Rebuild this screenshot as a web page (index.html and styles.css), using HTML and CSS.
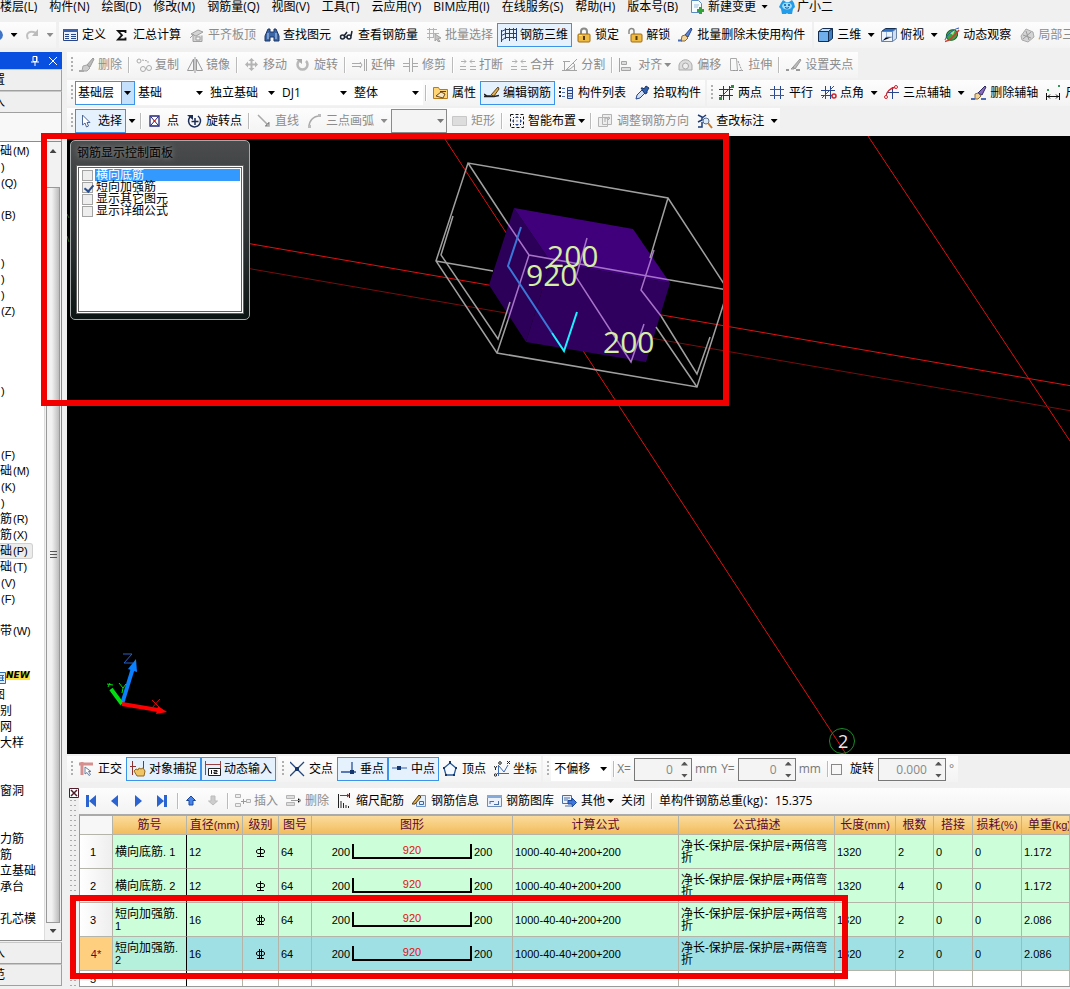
FILE: index.html
```html
<!DOCTYPE html>
<html lang="zh-CN">
<head>
<meta charset="utf-8">
<title>钢筋三维</title>
<link rel="stylesheet" href="styles.css">
</head>
<body>
<svg class="sprite" aria-hidden="true">
  <symbol id="define" viewBox="0 0 16 16"><path fill="#eaf1fb" stroke="#27458c" d="M.5 2.500h14v11H.5z"/><path fill="#3c62ad" d="M0 2h15v3H0z"/><path stroke="#27458c" d="M2 7.500h4M2 9.500h4M2 11.500h4M8 7.500h5M8 9.500h5M8 11.500h5"/></symbol>
  <symbol id="sum" viewBox="0 0 16 16"><path fill="none" stroke="#111" stroke-width="1.800" d="M11.500 6V4H4l4 4.200L4 12.500h7.500v-2"/></symbol>
  <symbol id="slab" viewBox="0 0 16 16"><path fill="#d4d4d4" stroke="#a0a0a0" d="M2 7l7-4 5 2-7 4zM4 8.500v6h9v-6M7 10h4v3H7zM1 11l4-4"/></symbol>
  <symbol id="find" viewBox="0 0 16 16"><path fill="#3b66a8" stroke="#1c3766" d="M4 2h2v3h4V2h2l3 7v5h-5v-4H6v4H1V9z"/><path stroke="#b9d4f4" d="M4 6v6M12 6v6"/></symbol>
  <symbol id="glasses" viewBox="0 0 16 16"><g fill="none" stroke="#1a2433" stroke-width="1.500"><circle cx="3.500" cy="10" r="2"/><circle cx="10" cy="10" r="2"/><path d="M5 9l3-4M12 9l1-5M6 10h2"/></g></symbol>
  <symbol id="batch" viewBox="0 0 16 16"><path fill="none" stroke="#b4b4b4" d="M1 2.500h10M1 6.500h12M1 10.500h7M3.500 1v12M7.500 1v10"/><path fill="#c6c6c6" stroke="#a4a4a4" d="M9 7l6 4-3 .5 2 3h-2l-1.500-2.500L9 14z"/></symbol>
  <symbol id="rebar3d" viewBox="0 0 16 16"><path fill="none" stroke="#24407e" d="M.5 4.500l4-2h11M.5 8.500l4-2h11M.5 13.500l4-3h11M.5 3v12M4.500 1v11M8.500 1v13M12.500 1v11M15.500 1v13"/></symbol>
  <symbol id="lock" viewBox="0 0 16 16"><path fill="none" stroke="#8a8a86" stroke-width="2" d="M5 8V4.500a3 3 0 016 0V8"/><rect x="2" y="7" width="12" height="8" rx="1" fill="#f0bb42" stroke="#a06b10"/><path stroke="#533807" stroke-width="2" d="M8 9v4"/><path stroke="#ffe7a0" d="M3 8.500h3"/></symbol>
  <symbol id="unlock" viewBox="0 0 16 16"><path fill="none" stroke="#8a8a86" stroke-width="1.500" d="M2 7V4a2.500 2.500 0 015 0v3"/><rect x="4" y="7" width="11" height="8" rx="1" fill="#f0bb42" stroke="#a06b10"/><path stroke="#533807" stroke-width="2" d="M9.500 9v4"/></symbol>
  <symbol id="brush" viewBox="0 0 16 16"><path fill="#5b83cf" stroke="#27458c" d="M7 8l6-7 1 1-4 8z"/><path fill="#f0d39a" stroke="#8b6a3a" d="M4 9l3-1 3 3-3 3H3z"/><path stroke="#4a6ab2" stroke-width="2" d="M0 13.500h4"/></symbol>
  <symbol id="brushgray" viewBox="0 0 16 16"><path fill="#bbb" stroke="#999" d="M8 8l6-7 1 1-4 8z"/><path fill="#ccc" stroke="#a4a4a4" d="M4 9l4-1 3 3-3 3H3z"/><path stroke="#aaa" stroke-width="2" d="M0 14h5"/></symbol>
  <symbol id="cube" viewBox="0 0 16 16"><path fill="#bfe0fb" stroke="#152d50" d="M.5 4.500l4-3h10l-4 3z"/><path fill="#6fb0ec" stroke="#152d50" d="M.5 4.500h10v10H.5z"/><path fill="#3c7fc5" stroke="#152d50" d="M10.500 4.500l4-3v10l-4 3z"/></symbol>
  <symbol id="topview" viewBox="0 0 16 16"><path fill="#2d6fc0" stroke="#152d50" d="M.5 4.500l4-3h11l-4 3z"/><path fill="#eef4fb" stroke="#6982a6" d="M.5 4.500h11v10H.5z"/><path fill="#cfdff2" stroke="#6982a6" d="M11.500 4.500l4-3v10l-4 3z"/><path stroke="#9bb4d6" d="M1 14l4-4h6M5.500 5v5"/></symbol>
  <symbol id="orbit" viewBox="0 0 16 16"><ellipse cx="8" cy="8" rx="6" ry="5" transform="rotate(-35 8 8)" fill="#37a447" stroke="#146226"/><path fill="#a3e68c" d="M6 6l5-3-2 5z"/><path fill="none" stroke="#d9392c" stroke-width="1.500" d="M1 14.500C6 14 12 7 15 3"/><path fill="none" stroke="#2b58b4" d="M1 13C2 9 9 2 15 1"/></symbol>
  <symbol id="local" viewBox="0 0 16 16"><path fill="#d3d3d3" stroke="#aaa" d="M2 9l5-7 7 3 1 5-6 5-6-2z"/><path stroke="#999" d="M4 8l8 3M7 4l3 9M12 5l-8 7"/></symbol>
  <symbol id="newdoc" viewBox="0 0 16 16"><path fill="#f6fbff" stroke="#5a8bc0" d="M1.500 1.500h7l3 3v9h-10z"/><path stroke="#9bbce0" d="M4 6h5M4 8h4"/><path stroke="#32a436" stroke-width="3" d="M10.500 8v7M7 11.500h7"/></symbol>
  <symbol id="mascot" viewBox="0 0 16 16"><path fill="#229be8" d="M2 4l2-3 3 2h3l3-2 2 3 1 4-2 2-1 5H9l-1-1-1 1H3l-1-5-2-2z"/><ellipse cx="8" cy="7" rx="5" ry="3.500" fill="#9bdcff"/><path stroke="#105698" stroke-width="1.500" d="M6 5v2M10 5v2"/><path fill="none" stroke="#105698" d="M6 8.500q2 1.500 4 0"/></symbol>
  <symbol id="redo" viewBox="0 0 16 16"><path fill="none" stroke="#c0c0c0" stroke-width="2" d="M4 12C1 6 6 3 12 6"/><path fill="#bbb" d="M14 2v7H8z"/></symbol>
  <symbol id="copy" viewBox="0 0 16 16"><g fill="none" stroke="#aaa"><circle cx="3" cy="4" r="2"/><circle cx="7" cy="12" r="2.500"/><circle cx="13" cy="11" r="2.500"/><path stroke-dasharray="2 1" d="M6 3l6 1v3"/></g></symbol>
  <symbol id="mirror" viewBox="0 0 16 16"><path fill="none" stroke="#999" d="M6.500 2v11.500h-6zM9.500 2v11.500h6zM8 0v16"/></symbol>
  <symbol id="move" viewBox="0 0 16 16"><path stroke="#b4b4b4" stroke-width="2" d="M7.500 3v9M3 7.500h9"/><path fill="#b4b4b4" d="M7.500 1l3 3h-6zM7.500 14l3-3h-6zM1 7.500l3-3v6zM14 7.500l-3-3v6z"/></symbol>
  <symbol id="rotate" viewBox="0 0 16 16"><path fill="none" stroke="#b8b8b8" stroke-width="2.500" d="M4 4a5 5 0 107 0"/><path fill="#aaa" d="M1 2h6v5z"/></symbol>
  <symbol id="extend" viewBox="0 0 16 16"><path fill="none" stroke="#aaa" d="M0 6.500h9M0 9.500h9M8 5l2 3-2 3M12.500 2v12M14.500 2v12"/></symbol>
  <symbol id="trim" viewBox="0 0 16 16"><path fill="none" stroke="#aaa" d="M0 6.500h6M0 9.500h6M10 6.500h5M10 9.500h5M6.500 1v14M9.500 1v14"/></symbol>
  <symbol id="breakl" viewBox="0 0 16 16"><path fill="none" stroke="#b0b0b0" d="M0 9.500h6M10 9.500h6M0 12.500h6M10 12.500h6M1 4.500h5M4 2.500l2 2-2 2M15 4.500h-5M12 2.500l-2 2 2 2"/></symbol>
  <symbol id="split" viewBox="0 0 16 16"><path fill="none" stroke="#a4a4a4" d="M1 4.500h7M0 13.500h15M11 6l4-4M4 13l7-7 2 2-5 4zM12.500 8v6M2.500 5v8"/></symbol>
  <symbol id="align" viewBox="0 0 16 16"><path fill="#ddd" stroke="#a4a4a4" d="M.5 1v14M2.500 4.500h5v3h-5zM2.500 10.500h9v3h-9z"/></symbol>
  <symbol id="offset" viewBox="0 0 16 16"><path fill="#ddd" stroke="#aaa" d="M1 13V8c2-7 11-7 13 0v5z"/><circle cx="7.500" cy="9" r="3" fill="#eee" stroke="#aaa"/></symbol>
  <symbol id="stretch" viewBox="0 0 16 16"><path fill="none" stroke="#aaa" d="M1.500 1.500h6l1 12h-7z"/><path stroke="#999" stroke-dasharray="2 1" d="M9 4l4 10M4 13.500h10"/></symbol>
  <symbol id="grip" viewBox="0 0 16 16"><path fill="#bbb" stroke="#999" d="M7 10l7-8 1 1-6 9zM5 12l2-2 1 2z"/><path stroke="#999" stroke-width="2" d="M0 13h3M10 13h4"/></symbol>
  <symbol id="props" viewBox="0 0 16 16"><path fill="#ffd474" stroke="#b57a1c" d="M.5 2.500h5l1 2h8v9H.5z"/><path fill="#f5e6c6" stroke="#6b4a20" d="M3 11l5-4 4 2-2 4z"/><path stroke="#27458c" d="M7 6.500h6"/></symbol>
  <symbol id="editbar" viewBox="0 0 16 16"><path fill="none" stroke="#222" stroke-width="1.500" d="M0 9l3 2h4M0 11.500h10l5-1"/><path fill="#e3b257" stroke="#5c4214" d="M7 10l7-8 1 2-5 7z"/></symbol>
  <symbol id="list" viewBox="0 0 16 16"><path stroke="#222" stroke-width="2" stroke-dasharray="2 2" d="M1 2v12"/><path stroke="#4b6fb0" d="M3 3.500h3M3 7.500h3M3 11.500h3"/><path fill="#dbe8fb" stroke="#27458c" d="M8.500 2.500h5v11h-5z"/><path stroke="#27458c" d="M9 5.500h4M9 8.500h4M9 11h4"/></symbol>
  <symbol id="picker" viewBox="0 0 16 16"><path fill="#cfe0f8" stroke="#27458c" d="M2 14l1-4 5-5 3 3-5 5z"/><path fill="#2d62b5" stroke="#1c3766" d="M7 3l2 0 1 1 2-3 3 2-2 3 0 2-2 1z"/></symbol>
  <symbol id="twopt" viewBox="0 0 16 16"><path stroke="#26355c" d="M4.500 1v14M10.500 1v14M0 4.500h14M0 10.500h14"/><path stroke="#8c2630" d="M1 13L13 1"/><path fill="#2b8a3c" d="M0 12h3v3H0zM12 0h3v3h-3z"/></symbol>
  <symbol id="parallel" viewBox="0 0 16 16"><path stroke="#27458c" d="M4.500 1v13M10.500 1v13"/><path stroke="#b2323a" d="M0 4.500h14M0 10.500h14"/></symbol>
  <symbol id="ptangle" viewBox="0 0 16 16"><path stroke="#27458c" d="M4.500 1v13M9.500 1v13M0 5.500h14M0 10.500h11"/><path fill="none" stroke="#c9202c" d="M1 13L13 1"/><circle cx="13" cy="11" r="2" fill="none" stroke="#d2222c" stroke-width="1.500"/></symbol>
  <symbol id="threept" viewBox="0 0 16 16"><path stroke="#27458c" d="M8.500 2v12M3 7.500h12"/><path fill="none" stroke="#d2222c" stroke-width="1.300" d="M2 12C2 7 6 3 12 2"/><circle cx="2" cy="12" r="1.500" fill="#fff" stroke="#d2222c"/><circle cx="12" cy="2" r="1.500" fill="#fff" stroke="#d2222c"/></symbol>
  <symbol id="delaxis" viewBox="0 0 16 16"><path fill="#8a6bc0" stroke="#302a60" d="M7 8l7-7 1 1-4 8z"/><path fill="#f0d39a" stroke="#8b6a3a" d="M4 9l3-1 3 3-3 3H4z"/><path stroke="#4a6ab2" stroke-width="2" d="M0 14h4M10 14h5"/></symbol>
  <symbol id="dim" viewBox="0 0 16 16"><path fill="none" stroke="#111" d="M.5 8v7M13.500 8v7M1 11.500h12M4 9.500l-2 2 2 2M10 9.500l2 2-2 2"/><path fill="#2f9a55" d="M1 4h2v2H1zM12 0h2v2h-2z"/></symbol>
  <symbol id="pointer" viewBox="0 0 16 16"><path fill="#fff" stroke="#4d6796" d="M3.500 2v10l2.500-2 1.500 4 2-1L8 9.500h3z"/></symbol>
  <symbol id="point" viewBox="0 0 16 16"><path fill="#fff" stroke="#22227c" stroke-width="1.300" d="M2 3h9v10H2z"/><path stroke="#22227c" d="M3 4l7 8M10 4l-7 8"/><path fill="#c22" d="M5.500 7h2v2h-2z"/></symbol>
  <symbol id="rotpt" viewBox="0 0 16 16"><path fill="none" stroke="#1b2d56" stroke-width="1.500" d="M3 4a6 6 0 108-1M8 5v7M4.500 8.500h7"/><path fill="#1b2d56" d="M0 2h6v5z"/></symbol>
  <symbol id="line" viewBox="0 0 16 16"><path stroke="#aaa" stroke-width="1.500" d="M2 2l11 11M13 9v4H9"/></symbol>
  <symbol id="arc" viewBox="0 0 16 16"><path fill="none" stroke="#aaa" stroke-width="1.500" d="M2 14C2 8 6 3 13 3"/><path fill="#bbb" d="M1 12h3v3H1zM11 1h3v3h-3z"/></symbol>
  <symbol id="rect" viewBox="0 0 16 16"><path fill="#ddd" stroke="#c8c8c8" d="M.5 3.500h14v9H.5z"/></symbol>
  <symbol id="smart" viewBox="0 0 16 16"><path fill="none" stroke="#111" stroke-dasharray="3 2" d="M1.500 1.500h13v13h-13z"/><path fill="#27458c" d="M8 3l2 2H6zM8 13l2-2H6zM3 8l2-2v4zM13 8l-2-2v4z"/><path fill="#111" d="M4 4h1v1H4zM11 4h1v1h-1zM4 11h1v1H4zM11 11h1v1h-1zM7.500 7.500h1v1h-1z"/></symbol>
  <symbol id="adjust" viewBox="0 0 16 16"><path fill="#eee" stroke="#b4b4b4" d="M.5 4.500h9v9h-9zM4.500 1.500h9v10h-9z"/><path fill="none" stroke="#aaa" d="M7 9V5h4M10 4l2 1-2 2"/></symbol>
  <symbol id="check" viewBox="0 0 16 16"><path fill="none" stroke="#1d3c78" stroke-width="1.500" d="M1 2l4 2v3L1 9M1 14h4V9M5 5l4-3"/><circle cx="9" cy="8" r="3" fill="#dcecfb" stroke="#5a6f8c"/><path stroke="#c57a28" stroke-width="2" d="M11 10l4 5"/></symbol>
  <symbol id="ortho" viewBox="0 0 16 16"><path fill="none" stroke="#d68f8f" stroke-width="3" d="M0 3h14M3 1v13"/><path fill="#fff" stroke="#6a7f9c" d="M6 6v7l2-1.500 2 3 1.500-1-2-3H12z"/></symbol>
  <symbol id="snap" viewBox="0 0 16 16"><path stroke="#8b3030" d="M2.500 0v14M0 5.500h6M13.500 0v8"/><path fill="#f0c565" stroke="#94691f" d="M4 10l2-2 2 1 1-2 2 1 2-1 2 3-1 5H7z"/></symbol>
  <symbol id="dyn" viewBox="0 0 16 16"><path fill="none" stroke="#9b4040" d="M.5 0v14M15.500 0v8M1 3.500h14"/><path fill="#fff" stroke="#222" d="M3.500 7.500h12v7h-12z"/><path fill="none" stroke="#111" d="M6.500 9v4M8.500 9.500h3.500v1.500H9v1.500h3.500"/></symbol>
  <symbol id="cross" viewBox="0 0 16 16"><path stroke="#24487e" stroke-width="1.300" d="M0 1l14 14M14 1L0 15"/><path fill="#14366e" d="M5 6h4v4H5z"/></symbol>
  <symbol id="perp" viewBox="0 0 16 16"><path stroke="#2a5298" stroke-width="1.300" d="M0 11h15M11 1v10"/><path fill="#14366e" d="M9 9h4v4H9z"/></symbol>
  <symbol id="mid" viewBox="0 0 16 16"><path stroke="#5a82c4" stroke-width="1.300" d="M0 7h15"/><path fill="#14366e" d="M5 5h4v4H5z"/></symbol>
  <symbol id="vertex" viewBox="0 0 16 16"><path fill="#f4f9ff" stroke="#2a5a94" stroke-width="1.300" d="M7 2l6 5-2 7H3L1 7z"/><path fill="#14366e" d="M6 0h2v3H6zM0 6h2v2H0zM12 6h2v2h-2zM2 13h2v2H2zM10 13h2v2h-2z"/></symbol>
  <symbol id="coord" viewBox="0 0 16 16"><path fill="none" stroke="#3b6bb4" d="M4.500 4v11M3 12.500h12M5 5l5 6 4-7"/><path fill="none" stroke="#222" d="M13 0l3 3M16 0l-3 3M0 5l1.500 2L3 5M1.500 7v2"/><circle cx="6" cy="2" r="1.300" fill="none" stroke="#222"/><circle cx="1.500" cy="14" r="1.200" fill="none" stroke="#222"/></symbol>
  <symbol id="first" viewBox="0 0 16 16"><path fill="#2b63d0" d="M3 2h3v12H3zM13 2v12L6 8z"/></symbol>
  <symbol id="prev" viewBox="0 0 16 16"><path fill="#2b63d0" d="M11 2v12L4 8z"/></symbol>
  <symbol id="next" viewBox="0 0 16 16"><path fill="#2b63d0" d="M4 2v12l7-6z"/></symbol>
  <symbol id="last" viewBox="0 0 16 16"><path fill="#2b63d0" d="M9 2h3v12H9zM2 2v12l7-6z"/></symbol>
  <symbol id="up" viewBox="0 0 16 16"><path fill="#4a86ea" stroke="#1c489c" d="M7 3l4.500 4.500H9V12H5V7.500H2.500z"/></symbol>
  <symbol id="down" viewBox="0 0 16 16"><path fill="#ccc" stroke="#bbb" d="M7 12L2.500 8H5V3h4v5h2.500z"/></symbol>
  <symbol id="insert" viewBox="0 0 16 16"><path fill="#eee" stroke="#b4b4b4" d="M.5 1.500h5v3h-5zM.5 10.500h5v3h-5zM11.500 6.500h4v3h-4z"/><path stroke="#999" d="M6 8.500h5M8.500 6v5"/></symbol>
  <symbol id="remove" viewBox="0 0 16 16"><path fill="#ddd" stroke="#b4b4b4" d="M.5 2.500h8v3h-8zM.5 9.500h8v3h-8z"/><path stroke="#999" d="M5 7.500h10M12 5l3 2.500-3 2.500"/></symbol>
  <symbol id="scale" viewBox="0 0 16 16"><path fill="none" stroke="#222" d="M1.500 1v14M4 8v7M6.500 10v5M9 12v3M11.500 13v2M12.500 0v5"/><path stroke="#a52828" d="M3 2.500h9M10 1l2 1.500L10 4"/></symbol>
  <symbol id="info" viewBox="0 0 16 16"><path fill="#e4effc" stroke="#6d92c8" d="M6.500 2.500h7v11h-9v-5z"/><path fill="#e3b257" stroke="#4c3714" d="M0 11l7-9 2 2-6 7z"/><path fill="none" stroke="#3b66a8" d="M7.500 8.500h4v3h-4z"/></symbol>
  <symbol id="library" viewBox="0 0 16 16"><path fill="#eaf1fb" stroke="#6d8cb8" d="M.5 2.500h14v11H.5z"/><path fill="#87a9d8" d="M0 2h15v3H0z"/><path fill="none" stroke="#4b6fa5" d="M3 8v3M3 8.500h4M7 11.500h5M11.500 8v3"/></symbol>
  <symbol id="other" viewBox="0 0 16 16"><path fill="#eaf1fb" stroke="#4b6fa5" d="M.5 2.500h9v8h-9zM3 13h6"/><path stroke="#4b6fa5" d="M2 5h6M2 7h4"/><path fill="#3d77dd" stroke="#1c489c" d="M6 7.500h4V5l4.500 4.500-4.500 4.500v-3H6z"/></symbol>
  <symbol id="steel2" viewBox="0 0 12 12"><path fill="none" stroke="#000" d="M5.500 1v10M2 10.500h7M3 3.500h5l1.500 1v2l-1.500 1H3l-1.500-1v-2z"/></symbol>
  <symbol id="steel3" viewBox="0 0 12 12"><path fill="none" stroke="#000" d="M4.500 1v10M6.500 1v10M2 10.500h7M3 3.500h5l1.500 1v2l-1.500 1H3l-1.500-1v-2z"/></symbol>
</svg>

<nav class="menu">
  <button>楼层(L)</button><button>构件(N)</button><button>绘图(D)</button><button>修改(M)</button><button>钢筋量(Q)</button><button>视图(V)</button><button>工具(T)</button><button>云应用(Y)</button><button>BIM应用(I)</button><button>在线服务(S)</button><button>帮助(H)</button><button>版本号(B)</button>
  <button><svg class="ic"><use href="#newdoc"/></svg>新建变更<i class="tri wide"></i></button>
  <button><svg class="ic"><use href="#mascot"/></svg>广小二</button>
</nav>

<div class="row">
  <div class="bar">
    <svg class="stub" viewBox="0 0 8 16"><path fill="#3f74c9" d="M0 3q3 2 3 5t-3 5z"/></svg>
    <button class="dd" aria-label="撤销列表"><i class="tri"></i></button>
    <button class="tb off" aria-label="恢复"><svg class="ic"><use href="#redo"/></svg></button>
    <button class="dd off" aria-label="恢复列表"><i class="tri"></i></button>
  </div>
  <div class="bar spaced">
    <button class="tb"><svg class="ic"><use href="#define"/></svg>定义</button>
    <button class="tb"><svg class="ic"><use href="#sum"/></svg>汇总计算</button>
    <button class="tb off"><svg class="ic"><use href="#slab"/></svg>平齐板顶</button>
    <button class="tb"><svg class="ic"><use href="#find"/></svg>查找图元</button>
    <button class="tb"><svg class="ic"><use href="#glasses"/></svg>查看钢筋量</button>
    <button class="tb off"><svg class="ic"><use href="#batch"/></svg>批量选择</button>
    <button class="tb on"><svg class="ic"><use href="#rebar3d"/></svg>钢筋三维</button>
    <button class="tb"><svg class="ic"><use href="#lock"/></svg>锁定</button>
    <button class="tb"><svg class="ic"><use href="#unlock"/></svg>解锁</button>
    <button class="tb"><svg class="ic"><use href="#brush"/></svg>批量删除未使用构件</button>
  </div>
  <div class="bar fill">
    <button class="tb"><svg class="ic"><use href="#cube"/></svg>三维</button><button class="dd" aria-label="三维选项"><i class="tri"></i></button>
    <button class="tb"><svg class="ic"><use href="#topview"/></svg>俯视</button><button class="dd" aria-label="俯视选项"><i class="tri"></i></button>
    <button class="tb"><svg class="ic"><use href="#orbit"/></svg>动态观察</button>
    <button class="tb off"><svg class="ic"><use href="#local"/></svg>局部三维</button>
  </div>
</div>

<div class="main">
  <aside class="side">
    <header class="side-head">
      <svg viewBox="0 0 10 12"><path fill="none" stroke="#fff" d="M3 1.500h4v5H3zM1 7h8M5 7v4M6.500 2v5"/></svg>
      <svg viewBox="0 0 10 12"><path stroke="#fff" d="M1 2l8 8M9 2l-8 8"/></svg>
    </header>
    <button class="side-btn">置</button>
    <button class="side-btn">入</button>
    <div class="side-gap"></div>
    <div class="side-list">
      <ul>
        <li>础<b>(M)</b></li><li><b>)</b></li><li><b>(Q)</b></li><li></li><li><b>(B)</b></li><li></li><li></li>
        <li><b>)</b></li><li><b>)</b></li><li><b>)</b></li><li><b>(Z)</b></li><li></li><li></li><li></li><li></li>
        <li><b>)</b></li><li></li><li></li><li></li><li><b>(F)</b></li><li>础<b>(M)</b></li><li><b>(K)</b></li><li><b>)</b></li>
        <li>筋<b>(R)</b></li><li>筋<b>(X)</b></li><li class="hot">础<b>(P)</b></li><li>础<b>(T)</b></li><li><b>(V)</b></li><li><b>(F)</b></li><li></li>
        <li>带<b>(W)</b></li><li></li><li></li>
        <li class="new"><svg class="newic" viewBox="0 0 6 14"><path fill="#e4effc" stroke="#2f6ab5" d="M-2 1.500h7.500v11H-2"/><path stroke="#2f6ab5" d="M0 4.500h4M0 7h4M0 9.500h4M2.500 4v6"/></svg><em>NEW</em></li>
        <li class="cut">图</li><li>别</li><li>网</li><li>大样</li><li></li><li></li><li>窗洞</li><li></li><li></li><li>力筋</li><li>筋</li><li>立基础</li><li>承台</li><li></li><li>孔芯模</li>
      </ul>
      <div class="scroll">
        <i class="tri up"></i>
        <div class="thumb"><span></span></div>
        <i class="tri"></i>
      </div>
    </div>
    <button class="side-btn">入</button>
    <button class="side-btn">范</button>
  </aside>

  <div class="work">
    <div class="row">
      <div class="bar end">
        <span class="dots"></span>
        <button class="tb off"><svg class="ic"><use href="#brushgray"/></svg>删除</button><span class="sep"></span>
        <button class="tb off"><svg class="ic"><use href="#copy"/></svg>复制</button>
        <button class="tb off"><svg class="ic"><use href="#mirror"/></svg>镜像</button><span class="sep"></span>
        <button class="tb off"><svg class="ic"><use href="#move"/></svg>移动</button>
        <button class="tb off"><svg class="ic"><use href="#rotate"/></svg>旋转</button><span class="sep"></span>
        <button class="tb off"><svg class="ic"><use href="#extend"/></svg>延伸</button>
        <button class="tb off"><svg class="ic"><use href="#trim"/></svg>修剪</button><span class="sep"></span>
        <button class="tb off"><svg class="ic"><use href="#breakl"/></svg>打断</button>
        <button class="tb off"><svg class="ic"><use href="#breakl"/></svg>合并</button>
        <button class="tb off"><svg class="ic"><use href="#split"/></svg>分割</button><span class="sep"></span>
        <button class="tb off"><svg class="ic"><use href="#align"/></svg>对齐<i class="tri"></i></button>
        <button class="tb off"><svg class="ic"><use href="#offset"/></svg>偏移</button>
        <button class="tb off"><svg class="ic"><use href="#stretch"/></svg>拉伸</button><span class="sep"></span>
        <button class="tb off"><svg class="ic"><use href="#grip"/></svg>设置夹点</button>
      </div>
    </div>
    <div class="row">
      <div class="bar">
        <span class="dots"></span>
        <span class="combo lit"><select aria-label="楼层"><option>基础层</option></select><i class="tri"></i></span>
        <span class="combo"><select aria-label="构件类别"><option>基础</option></select><i class="tri"></i></span>
        <span class="combo"><select aria-label="构件类型"><option>独立基础</option></select><i class="tri"></i></span>
        <span class="combo"><select aria-label="构件名称"><option>DJ1</option></select><i class="tri"></i></span>
        <span class="combo"><select aria-label="单元"><option>整体</option></select><i class="tri"></i></span>
        <span class="sep"></span>
        <button class="tb"><svg class="ic"><use href="#props"/></svg>属性</button>
        <button class="tb on"><svg class="ic"><use href="#editbar"/></svg>编辑钢筋</button>
        <button class="tb"><svg class="ic"><use href="#list"/></svg>构件列表</button>
        <button class="tb"><svg class="ic"><use href="#picker"/></svg>拾取构件</button>
      </div>
      <div class="bar fill">
        <span class="dots"></span>
        <button class="tb"><svg class="ic"><use href="#twopt"/></svg>两点</button>
        <button class="tb"><svg class="ic"><use href="#parallel"/></svg>平行</button>
        <button class="tb"><svg class="ic"><use href="#ptangle"/></svg>点角</button><button class="dd" aria-label="点角选项"><i class="tri"></i></button>
        <button class="tb"><svg class="ic"><use href="#threept"/></svg>三点辅轴</button><button class="dd" aria-label="辅轴选项"><i class="tri"></i></button>
        <button class="tb"><svg class="ic"><use href="#delaxis"/></svg>删除辅轴</button>
        <button class="tb"><svg class="ic"><use href="#dim"/></svg>尺寸标注</button>
      </div>
    </div>
    <div class="row">
      <div class="bar">
        <span class="dots"></span>
        <button class="tb on"><svg class="ic"><use href="#pointer"/></svg>选择</button><button class="dd" aria-label="选择选项"><i class="tri"></i></button><span class="sep"></span>
        <button class="tb"><svg class="ic"><use href="#point"/></svg>点</button>
        <button class="tb"><svg class="ic"><use href="#rotpt"/></svg>旋转点</button><span class="sep"></span>
        <button class="tb off"><svg class="ic"><use href="#line"/></svg>直线</button>
        <button class="tb off"><svg class="ic"><use href="#arc"/></svg>三点画弧</button><button class="dd off" aria-label="画弧选项"><i class="tri"></i></button>
        <span class="combo boxed"><select aria-label="画弧方式"><option></option></select><i class="tri"></i></span>
        <button class="tb off"><svg class="ic"><use href="#rect"/></svg>矩形</button><span class="sep"></span>
        <button class="tb"><svg class="ic"><use href="#smart"/></svg>智能布置<i class="tri"></i></button><span class="sep"></span>
        <button class="tb off"><svg class="ic"><use href="#adjust"/></svg>调整钢筋方向</button>
        <button class="tb"><svg class="ic"><use href="#check"/></svg>查改标注</button><button class="dd" aria-label="标注选项"><i class="tri"></i></button>
      </div>
    </div>

    <section class="view">
      <svg class="scene">
        <g transform="translate(-67 -136)" fill="none">
          <path stroke="#e01010" d="M443 136L846 754M868 136L1072 444M240 242L1072 386"/>
          <path stroke="#7a0c0c" d="M240 267L1072 411"/>
          <path stroke="#2a5a1c" d="M67 214l2 4M67 236l2 6"/>
          <path fill="#2c0058" d="M514 208L489 285 526 342 551 262z"/>
          <path fill="#40007c" d="M514 208L633 229 670 283 551 262z"/>
          <path fill="#30005f" d="M551 262L670 283 646 362 526 342z"/>
          <g stroke="#a0a0a0" stroke-width="1.500">
            <path d="M436 261L468 163 668 198 728 290 697 387 497 353zM436 261L493 271M468 163L508 224M668 198L650 258"/>
            <path d="M453 216L441 255 498 339 510 302M661 316L697 374 710 337M656 327L697 387M508 320L497 353M670 280L728 290"/>
          </g>
          <g stroke="#a673c8" stroke-width="1.500"><path d="M508 224L529 255 670 280M529 255L508 320M654 250L641 290 661 316M587 238L576 277 631 362 644 324"/></g>
          <path stroke="#3978d8" stroke-width="2" d="M521 227L508 266 552 333"/>
          <path stroke="#1df0ff" stroke-width="2" d="M552 333L564 351 577 312"/>
          <g class="dims"><text x="547" y="267">200</text><text x="526" y="286">920</text><text x="603" y="353">200</text></g>
          <circle cx="842" cy="741" r="12.500" stroke="#1d8a2c"/><text class="axisno" x="838" y="748">2</text>
          <path stroke="#0a80ff" stroke-width="4" d="M122 704L133 668"/><path fill="#0a80ff" d="M136 659l-8 10 9 3z"/>
          <path stroke="#00e010" stroke-width="4" d="M122 704L111 689"/><path stroke="#00e010" d="M107 684l6 1M108 687l2-4M119 683l4 5 3-4M123 688l-1 5"/>
          <path stroke="#f00" stroke-width="4" d="M122 704L158 710"/><path fill="#f00" d="M167 712l-9-6-2 8z"/>
          <path stroke="#2a62c8" d="M123 654h9l-8 9h9"/><path stroke="#d01010" d="M152 700l8 8M160 699l-9 10"/>
        </g>
      </svg>
      <div class="panel">
        <h2>钢筋显示控制面板</h2>
        <div class="panel-list">
          <label class="sel"><input type="checkbox"><span>横向底筋</span></label>
          <label><input type="checkbox" checked><span>短向加强筋</span></label>
          <label><input type="checkbox"><span>显示其它图元</span></label>
          <label><input type="checkbox"><span>显示详细公式</span></label>
        </div>
      </div>
    </section>

    <div class="row status">
      <div class="bar">
        <span class="dots"></span>
        <button class="tb"><svg class="ic"><use href="#ortho"/></svg>正交</button>
        <button class="tb on"><svg class="ic"><use href="#snap"/></svg>对象捕捉</button>
        <button class="tb on"><svg class="ic"><use href="#dyn"/></svg>动态输入</button>
      </div>
      <div class="bar">
        <span class="dots"></span>
        <button class="tb"><svg class="ic"><use href="#cross"/></svg>交点</button>
        <button class="tb on"><svg class="ic"><use href="#perp"/></svg>垂点</button>
        <button class="tb on"><svg class="ic"><use href="#mid"/></svg>中点</button>
        <button class="tb"><svg class="ic"><use href="#vertex"/></svg>顶点</button>
        <button class="tb"><svg class="ic"><use href="#coord"/></svg>坐标</button>
      </div>
      <div class="bar">
        <span class="dots"></span>
        <span class="combo short"><select aria-label="偏移方式"><option>不偏移</option></select><i class="tri"></i></span>
        <span class="sep"></span>
        <label class="num">X=<span class="spin"><input type="text" value="0"><i class="tri up"></i><i class="tri"></i></span>mm</label>
        <label class="num">Y=<span class="spin"><input type="text" value="0"><i class="tri up"></i><i class="tri"></i></span>mm</label>
        <span class="sep"></span>
        <label class="rot"><input type="checkbox">旋转</label>
        <label class="num"><span class="spin big"><input type="text" value="0.000" aria-label="旋转角度"><i class="tri up"></i><i class="tri"></i></span>°</label>
      </div>
    </div>

    <section class="sheet">
      <div class="strip"><svg viewBox="0 0 10 10"><path fill="#fff" stroke="#501c2c" d="M.5 .5h9v9h-9z"/><path stroke="#501c2c" stroke-width="1.500" d="M2 2l6 6M8 2L2 8"/></svg></div>
      <div class="sheet-main">
        <div class="bar sheet-bar">
          <button class="tb nav" aria-label="首行"><svg class="ic"><use href="#first"/></svg></button>
          <button class="tb nav" aria-label="上一行"><svg class="ic"><use href="#prev"/></svg></button>
          <button class="tb nav" aria-label="下一行"><svg class="ic"><use href="#next"/></svg></button>
          <button class="tb nav" aria-label="末行"><svg class="ic"><use href="#last"/></svg></button><span class="sep"></span>
          <button class="tb tight" aria-label="上移"><svg class="ic"><use href="#up"/></svg></button>
          <button class="tb tight" aria-label="下移"><svg class="ic"><use href="#down"/></svg></button><span class="sep"></span>
          <button class="tb off"><svg class="ic"><use href="#insert"/></svg>插入</button>
          <button class="tb off"><svg class="ic"><use href="#remove"/></svg>删除</button>
          <button class="tb"><svg class="ic"><use href="#scale"/></svg>缩尺配筋</button>
          <button class="tb"><svg class="ic"><use href="#info"/></svg>钢筋信息</button>
          <button class="tb"><svg class="ic"><use href="#library"/></svg>钢筋图库</button>
          <button class="tb"><svg class="ic"><use href="#other"/></svg>其他<i class="tri"></i></button>
          <button class="tb">关闭</button><span class="sep"></span>
          <span class="total">单构件钢筋总重(kg)：15.375</span>
        </div>
        <table>
          <colgroup><col class="c0"><col class="c1"><col class="c2"><col class="c3"><col class="c4"><col class="c5"><col class="c6"><col class="c7"><col class="c8"><col class="c9"><col class="c10"><col class="c11"><col></colgroup>
          <thead><tr><th></th><th>筋号</th><th>直径<b>(mm)</b></th><th>级别</th><th>图号</th><th>图形</th><th>计算公式</th><th>公式描述</th><th>长度<b>(mm)</b></th><th>根数</th><th>搭接</th><th>损耗<b>(%)</b></th><th class="last">单重<b>(kg)</b></th></tr></thead>
          <tbody>
            <tr><th>1</th><td>横向底筋<b>. 1</b></td><td><b>12</b></td><td class="mid"><svg class="st"><use href="#steel2"/></svg></td><td><b>64</b></td><td><div class="shape"><b>200</b><span>920</span><b>200</b></div></td><td><b>1000-40-40+200+200</b></td><td><p>净长-保护层-保护层+两倍弯折</p></td><td><b>1320</b></td><td><b>2</b></td><td><b>0</b></td><td><b>0</b></td><td><b>1.172</b></td></tr>
            <tr><th>2</th><td>横向底筋<b>. 2</b></td><td><b>12</b></td><td class="mid"><svg class="st"><use href="#steel2"/></svg></td><td><b>64</b></td><td><div class="shape"><b>200</b><span>920</span><b>200</b></div></td><td><b>1000-40-40+200+200</b></td><td><p>净长-保护层-保护层+两倍弯折</p></td><td><b>1320</b></td><td><b>4</b></td><td><b>0</b></td><td><b>0</b></td><td><b>1.172</b></td></tr>
            <tr><th>3</th><td><p>短向加强筋<b>.<br>1</b></p></td><td><b>16</b></td><td class="mid"><svg class="st"><use href="#steel3"/></svg></td><td><b>64</b></td><td><div class="shape"><b>200</b><span>920</span><b>200</b></div></td><td><b>1000-40-40+200+200</b></td><td><p>净长-保护层-保护层+两倍弯折</p></td><td><b>1320</b></td><td><b>2</b></td><td><b>0</b></td><td><b>0</b></td><td><b>2.086</b></td></tr>
            <tr class="cur"><th>4*</th><td><p>短向加强筋<b>.<br>2</b></p></td><td><b>16</b></td><td class="mid"><svg class="st"><use href="#steel3"/></svg></td><td><b>64</b></td><td><div class="shape"><b>200</b><span>920</span><b>200</b></div></td><td><b>1000-40-40+200+200</b></td><td><p>净长-保护层-保护层+两倍弯折</p></td><td><b>1320</b></td><td><b>2</b></td><td><b>0</b></td><td><b>0</b></td><td><b>2.086</b></td></tr>
            <tr class="blank"><th>5</th><td></td><td></td><td></td><td></td><td></td><td></td><td></td><td></td><td></td><td></td><td></td><td></td></tr>
          </tbody>
        </table>
      </div>
    </section>
  </div>
</div>
<div class="mark mark-view"></div>
<div class="mark mark-rows"></div>
</body>
</html>
```
FILE: styles.css
```css
* { box-sizing: border-box; }
body {
  margin: 0; height: 100vh; overflow: hidden; position: relative;
  display: flex; flex-direction: column;
  background: #f0f0f0; color: #000;
  font: 12px/16px "Open Sans", "Noto Sans CJK SC", sans-serif;
}
button, select, input { font: inherit; color: inherit; margin: 0; }
button { border: 0; padding: 0; background: none; white-space: nowrap; }
svg { display: block; flex: none; }
.sprite { position: absolute; width: 0; height: 0; }
.ic { width: 16px; height: 16px; }

.menu { display: flex; gap: 12px; height: 22px; flex: none; align-items: flex-start; line-height: 13px; }
.menu button { display: flex; align-items: center; gap: 2px; flex: none; height: 13px; }

.row { display: flex; gap: 2px; height: 26px; flex: none; overflow: hidden; }
.bar { display: flex; align-items: center; flex: none; background: linear-gradient(#fdfdfd, #f3f3f3); }
.bar.fill { flex: 1 0 auto; }
.bar.spaced { margin-left: 1px; padding-right: 3px; }
.bar.end { padding-right: 1px; }
.stub { width: 8px; height: 16px; }
.tb { display: flex; align-items: center; gap: 3px; flex: none; height: 24px; padding: 0 3px; border: 1px solid transparent; }
.tb.on { background: #e5f1fc; border-color: #3c94e8; }
.tb.tight { padding: 0 2px; }
.off { color: #8c8c8c; }
.dd { width: 12px; height: 24px; display: flex; align-items: center; justify-content: center; flex: none; }
.tri { flex: none; width: 7px; height: 4px; margin: 0 -1px; background: currentColor; clip-path: polygon(0 0, 100% 0, 50% 100%); }
.tri.up { clip-path: polygon(50% 0, 100% 100%, 0 100%); }
.tri.wide { margin-left: 3px; }
.sep { width: 2px; height: 16px; margin: 0 2px; flex: none; background: linear-gradient(90deg, #bbb 50%, #fff 50%); }
.dots { width: 8px; height: 16px; flex: none; background: repeating-linear-gradient(#b0b0b0 0 2px, transparent 2px 4px) 4px 0 / 2px 16px no-repeat; }

.combo { display: flex; align-items: center; position: relative; width: 72px; height: 24px; background: #fff; flex: none; }
.combo select { appearance: none; border: 0; padding: 0 14px 0 3px; width: 100%; height: 100%; background: none; outline: 0; }
.combo .tri { position: absolute; right: 5px; }
.combo.lit { width: 60px; border: 1px solid #3c94e8; background: linear-gradient(90deg, #fff 45px, #3c94e8 45px 46px, #c4e0fb 46px); }
.combo.lit select { padding-left: 2px; }
.combo.lit .tri { right: 4px; }
.combo.boxed { width: 56px; border: 1px solid #8a8a8a; margin: 0 1px; background: #f4f4f4; color: #777; }
.combo.boxed .tri { right: 3px; }
.combo.short { width: 60px; }

.main { flex: 1; min-height: 0; display: flex; gap: 5px; padding-top: 4px; }
.side { width: 62px; flex: none; display: flex; flex-direction: column; padding-bottom: 3px; background: #f0f0f0; overflow: hidden; }
.side-head { height: 17px; flex: none; display: flex; align-items: center; justify-content: flex-end; gap: 8px; padding-right: 4px; background: #0a50e0; }
.side-head svg { width: 10px; height: 12px; }
.side-btn { height: 22px; flex: none; text-align: left; text-indent: -7px; border: 1px solid #a0a0a0; border-left: 0; border-top-color: #c8c8c8; background: #efefef; overflow: hidden; }
.side-gap { height: 28px; flex: none; background: #f8f8f8; border-right: 1px solid #a0a0a0; }
.side-list { flex: 1; min-height: 0; display: flex; background: #fff; border: 1px solid #8c8c8c; border-left: 0; margin-bottom: 1px; overflow: hidden; }
.side-list ul { flex: 1; min-width: 0; list-style: none; margin: 0; padding: 1px 0 0; }
.side-list li { height: 16px; display: flex; align-items: center; white-space: nowrap; }
.side-list li b { padding-left: 1px; }
.side-list li.hot { width: 33px; background: #ececec; border: 1px solid #d0d0d0; border-left: 0; border-radius: 0 3px 3px 0; }
.side-list li.cut { text-indent: -7px; }
.side-list li.new { align-items: flex-start; }
.side-list em { font: italic bold 9px/9px "DejaVu Sans", sans-serif; background: #ffe23c; }
.newic { width: 6px; height: 14px; }
b { font: 11px/12px "Liberation Sans", sans-serif; }
.scroll { width: 17px; flex: none; display: flex; flex-direction: column; align-items: center; gap: 6px; padding: 7px 0; background: #f2f2f2; border-left: 1px solid #ddd; color: #444; }
.thumb { flex: 1; width: 14px; margin-top: 28px; display: flex; align-items: center; justify-content: center; border: 1px solid #999; background: linear-gradient(90deg, #f2f2f2 40%, #bcbcbc); }
.thumb span { width: 7px; height: 8px; background: repeating-linear-gradient(#555 0 1px, transparent 1px 3px); }

.work { flex: 1; min-width: 0; display: flex; flex-direction: column; gap: 2px; }
.view { flex: 1; min-height: 0; position: relative; background: #000; overflow: hidden; }
.scene { width: 100%; height: 100%; }
.dims { font: 30px "Open Sans", sans-serif; fill: #d4f0a4; }
.axisno { font: 18px "Open Sans", sans-serif; fill: #e8e8e8; }

.panel { position: absolute; left: 3px; top: 4px; width: 180px; padding: 0 5px 5px; border: 1px solid #a4aaaa; border-radius: 5px; background: linear-gradient(#4a4c4d, #303434 50%, #0d1414); }
.panel h2 { margin: 0; font-size: 12px; font-weight: 400; line-height: 24px; padding-left: 1px; color: #000; text-shadow: 0 0 4px #8a8a8a, 0 0 8px #808080; }
.panel-list { min-height: 149px; background: #fff; border: 3px double #606060; padding: 1px 1px 0 3px; }
.panel-list label { display: flex; align-items: center; gap: 2px; height: 12px; line-height: 12px; }
.panel-list input { appearance: none; position: relative; width: 11px; height: 11px; flex: none; border: 1px solid #a4a4a4; background: #eee; }
.panel-list input:checked::after { content: ""; position: absolute; left: 3px; top: 0; width: 4px; height: 7px; border: solid #274d8c; border-width: 0 2px 2px 0; transform: rotate(40deg); }
.panel-list span { flex: 1; padding-left: 1px; }
.panel-list .sel span { background: #3399ff; color: #fff; }

.num { display: flex; align-items: center; gap: 3px; color: #777; margin-right: 4px; }
.spin { position: relative; display: block; width: 58px; height: 23px; }
.spin.big { width: 68px; }
.spin input { display: block; width: 100%; height: 100%; text-align: right; padding: 0 18px 0 0; border: 1px solid #777; background: #f4f4f4; color: #888; }
.spin .tri { position: absolute; right: 5px; bottom: 3px; color: #555; }
.spin .tri.up { top: 4px; bottom: auto; }
.rot { display: flex; align-items: center; gap: 8px; margin-right: 4px; }
.rot input { appearance: none; width: 11px; height: 11px; border: 1px solid #888; background: #f7f7f7; }

.sheet { flex: none; display: flex; gap: 2px; padding: 4px 0 2px 2px; }
.strip { width: 8px; flex: none; background: radial-gradient(circle, #aaa 1px, transparent 1px) 0 0 / 4px 5px; }
.strip svg { width: 10px; height: 10px; background: #f0f0f0; }
.sheet-main { flex: 1; min-width: 0; overflow: hidden; border-bottom: 1px solid #999; }
.sheet-bar { height: 26px; }
.total { padding-left: 4px; white-space: nowrap; }
table { width: 100%; table-layout: fixed; border-collapse: separate; border-spacing: 0; background: #fff; border-top: 2px solid #aaa; border-left: 1px solid #999; line-height: 12px; }
.c0 { width: 33px; } .c1 { width: 74px; } .c2 { width: 56px; } .c3 { width: 36px; } .c4 { width: 33px; }
.c5 { width: 201px; } .c6 { width: 166px; } .c7 { width: 156px; } .c8 { width: 61px; } .c9 { width: 38px; }
.c10 { width: 39px; } .c11 { width: 49px; }
th, td { padding: 0 2px; border: 0 solid #b4b4a8; border-width: 0 1px 1px 0; font-weight: 400; overflow: hidden; white-space: nowrap; }
thead th { height: 19px; color: #5a0a32; background: linear-gradient(#fbdc9c, #f1bc5c); }
thead th:first-child { background: #f7f7f7; }
thead th.last { text-align: left; padding-left: 6px; }
td { height: 34px; background: #ccffd9; }
tbody th { font: 11px/12px "Liberation Sans", sans-serif; background: linear-gradient(90deg, #fff, #eee); padding-right: 8px; }
tbody td:nth-child(2) { border-right-color: #000; }
.cur td { background: #9fe0e4; }
.cur td:nth-child(2) { background: #b4f0dc; }
.cur th { background: #ffcf80; color: #5a0a32; padding-right: 2px; }
.blank th, .blank td { height: 15px; background: #fff; border-bottom: 0; }
td p { margin: 0; height: 24px; white-space: normal; }
.mid .st { margin: 0 auto; }
.st { width: 12px; height: 12px; }
.shape { display: flex; justify-content: center; align-items: center; gap: 2px; }
.shape span { width: 120px; height: 15px; border: 2px solid #000; border-top: 0; color: #e01010; text-align: center; font: 11px/12px "Liberation Sans", sans-serif; }

.mark { position: absolute; border: 6px solid #f20000; pointer-events: none; }
.mark-view { left: 41px; top: 133px; width: 688px; height: 273px; }
.mark-rows { left: 70px; top: 895px; width: 778px; height: 84px; }
```
